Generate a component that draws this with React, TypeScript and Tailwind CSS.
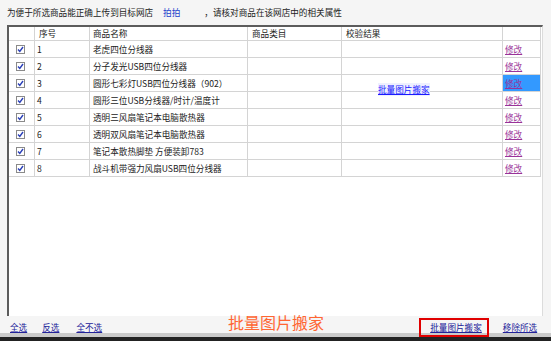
import React from "react";

const rows = [
  "老虎四位分线器",
  "分子发光USB四位分线器",
  "圆形七彩灯USB四位分线器（902）",
  "圆形三位USB分线器/时计/温度计",
  "透明三风扇笔记本电脑散热器",
  "透明双风扇笔记本电脑散热器",
  "笔记本散热脚垫 方便装卸783",
  "战斗机带强力风扇USB四位分线器",
];

const cols = "grid-cols-[26px_55px_158px_94px_161px_38px]";

function Check() {
  return (
    <div className="ml-[7px] w-[9px] h-[9px] border border-[#8a8a8a] bg-white flex items-center justify-center">
      <svg width="7" height="7" viewBox="0 0 7 7">
        <path d="M1 3.5 L2.8 5.5 L6 1" stroke="#2a3fb8" strokeWidth="1.4" fill="none" />
      </svg>
    </div>
  );
}

export default function App() {
  const font = { fontFamily: '"Noto Sans CJK SC", "DejaVu Sans", sans-serif' };
  const cell = "border-r border-b border-[#d4d4d4] flex items-center";
  return (
    <div
      className="w-[551px] h-[341px] bg-[#f5f5f5] flex flex-col overflow-hidden relative text-[8.6px] text-[#222]"
      style={font}
    >
      {/* top text */}
      <div className="h-[25px] flex items-center pl-[7px] whitespace-nowrap">
        <span>为便于所选商品能正确上传到目标网店</span>
        <span className="ml-[10px] text-[#2244cc]">拍拍</span>
        <span className="ml-[24px]">，请核对商品在该网店中的相关属性</span>
      </div>

      {/* panel */}
      <div className="ml-[7px] w-[536px] h-[291px] bg-white border-l-2 border-t-2 border-[#5c5c5c] border-r border-b-0 border-r-[#dcdcdc] relative">
        <div className={`grid ${cols}`}>
          <div className={`${cell} h-[14px]`} />
          <div className={`${cell} h-[14px] pl-[4px]`}>序号</div>
          <div className={`${cell} h-[14px] pl-[3px]`}>商品名称</div>
          <div className={`${cell} h-[14px] pl-[4px]`}>商品类目</div>
          <div className={`${cell} h-[14px] pl-[4px]`}>校验结果</div>
          <div className={`${cell} h-[14px]`} />
          {rows.map((name, i) => (
            <React.Fragment key={i}>
              <div className={`${cell} h-[17px]`}>
                <Check />
              </div>
              <div className={`${cell} h-[17px] pl-[2px]`}>{i + 1}</div>
              <div className={`${cell} h-[17px] pl-[3px] whitespace-nowrap`}>{name}</div>
              <div className={`${cell} h-[17px]`} />
              <div className={`${cell} h-[17px]`} />
              <div
                className={`${cell} h-[17px] pl-[2px] ${i === 2 ? "bg-[#3399ff]" : ""}`}
              >
                <span className="text-[#993399] underline">修改</span>
              </div>
            </React.Fragment>
          ))}
        </div>
        <span className="absolute left-[369px] top-[56px] text-[#1a1aff] underline bg-[#eef0ff] whitespace-nowrap">
          批量图片搬家
        </span>
      </div>

      {/* footer */}
      <div className="h-[17px] flex items-end relative whitespace-nowrap text-[#222299]">
        <span className="ml-[10px] underline leading-[12px]">全选</span>
        <span className="ml-[15px] underline leading-[12px]">反选</span>
        <span className="ml-[17px] underline leading-[12px]">全不选</span>
        <span className="ml-[328px] underline leading-[12px]">批量图片搬家</span>
        <span className="ml-[21px] underline leading-[12px]">移除所选</span>
        <div className="absolute left-[419px] top-[2px] w-[70px] h-[19px] border-2 border-[#e00000]" />
        <span
          className="absolute left-[228px] top-[-2px] text-[16px] leading-none text-[#ff6633]"
          style={font}
        >
          批量图片搬家
        </span>
      </div>
      <div className="h-[4px] bg-[#cacaca]" />
      <div className="h-[4px] bg-[#222]" />
    </div>
  );
}
